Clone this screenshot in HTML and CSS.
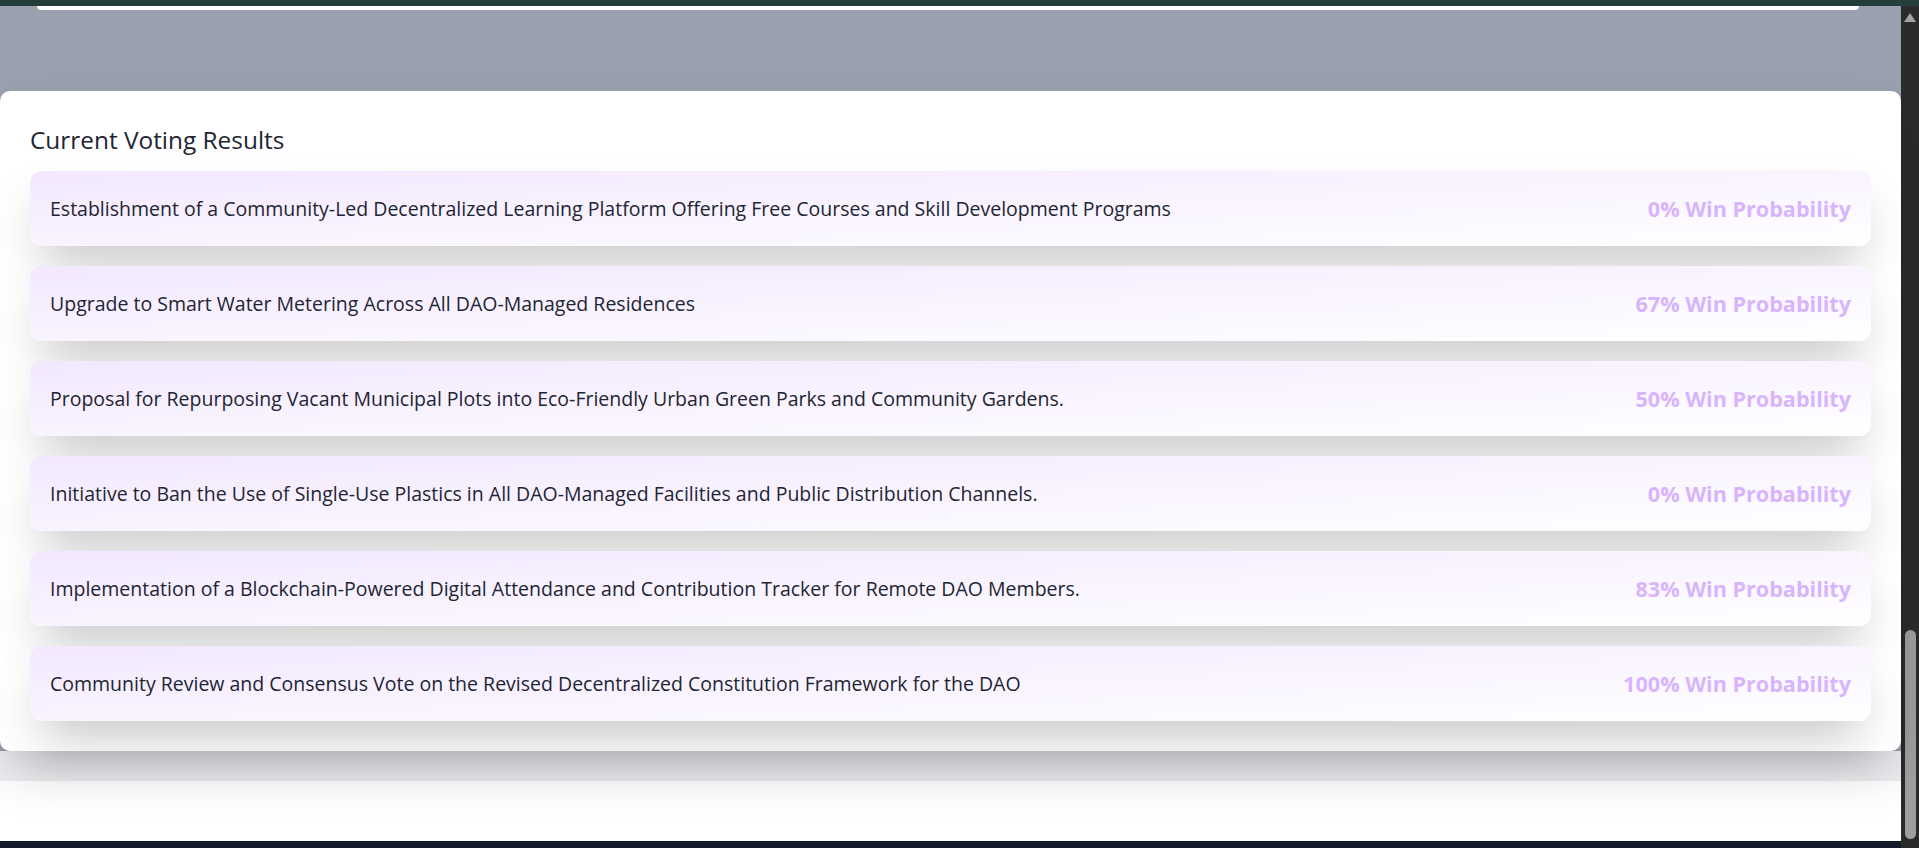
FILE: index.html
```html
<!DOCTYPE html>
<html lang="en">
<head>
<meta charset="utf-8">
<title>Current Voting Results</title>
<link rel="stylesheet" href="styles.css">
</head>
<body>
<div class="topbar"></div>
<div class="window">
  <div class="page">
    <section class="overlay">
      <div class="prev-card"></div>
      <div class="results-card">
        <h2 class="results-title">Current Voting Results</h2>
        <ul class="results-list">
          <li class="result-row">
            <span class="result-name">Establishment of a Community-Led Decentralized Learning Platform Offering Free Courses and Skill Development Programs</span>
            <span class="result-prob">0% Win Probability</span>
          </li>
          <li class="result-row">
            <span class="result-name">Upgrade to Smart Water Metering Across All DAO-Managed Residences</span>
            <span class="result-prob">67% Win Probability</span>
          </li>
          <li class="result-row">
            <span class="result-name">Proposal for Repurposing Vacant Municipal Plots into Eco-Friendly Urban Green Parks and Community Gardens.</span>
            <span class="result-prob">50% Win Probability</span>
          </li>
          <li class="result-row">
            <span class="result-name">Initiative to Ban the Use of Single-Use Plastics in All DAO-Managed Facilities and Public Distribution Channels.</span>
            <span class="result-prob">0% Win Probability</span>
          </li>
          <li class="result-row">
            <span class="result-name">Implementation of a Blockchain-Powered Digital Attendance and Contribution Tracker for Remote DAO Members.</span>
            <span class="result-prob">83% Win Probability</span>
          </li>
          <li class="result-row">
            <span class="result-name">Community Review and Consensus Vote on the Revised Decentralized Constitution Framework for the DAO</span>
            <span class="result-prob">100% Win Probability</span>
          </li>
        </ul>
      </div>
    </section>
    <div class="shadow-strip"></div>
    <div class="blank"></div>
    <footer class="footer"></footer>
  </div>
  <div class="scrollbar">
    <span class="scroll-arrow"></span>
    <span class="scroll-thumb"></span>
  </div>
</div>
</body>
</html>
```

FILE: styles.css
```css
* { box-sizing: border-box; }

html, body {
  margin: 0;
  padding: 0;
  height: 848px;
  overflow: hidden;
}

body {
  font-family: "Open Sans", "Noto Sans", sans-serif;
  color: #1f2937;
  background: #ffffff;
}

.topbar {
  height: 6px;
  background: #263e3b;
}

.window {
  display: flex;
  height: 842px;
}

.page {
  flex: 1;
  display: flex;
  flex-direction: column;
  min-width: 0;
}

.overlay {
  background: #9aa0ad;
  padding-bottom: 0;
}

.prev-card {
  height: 4px;
  margin: 0 42px 81px 37px;
  background: #ffffff;
  border-radius: 0 0 10px 10px;
  box-shadow: 0 25px 50px -12px rgba(0, 0, 0, 0.25);
}

.results-card {
  position: relative;
  z-index: 1;
  height: 660px;
  background: #ffffff;
  border-radius: 10px;
  padding: 31px 30px 30px 30px;
  box-shadow: 0 25px 50px -12px rgba(0, 0, 0, 0.25);
}

.results-title {
  margin: 0 0 13px 0;
  font-size: 24.4px;
  line-height: 36px;
  font-weight: 500;
  color: #1e2533;
}

.results-list {
  list-style: none;
  margin: 0;
  padding: 0;
  display: flex;
  flex-direction: column;
  gap: 20px;
}

.result-row {
  height: 75px;
  display: flex;
  align-items: center;
  justify-content: space-between;
  padding: 0 20px;
  border-radius: 12px;
  background: linear-gradient(to bottom right, #f3e8ff, #ffffff);
  box-shadow: 0 25px 50px -12px rgba(0, 0, 0, 0.25);
}

.result-name {
  font-size: 19.5px;
  font-weight: 500;
  color: #1e2533;
}

.result-prob {
  font-size: 21.6px;
  font-weight: 700;
  color: #d8b4fe;
}

.shadow-strip {
  height: 30px;
  background: #eceef1;
}

.blank {
  height: 60px;
  background: #ffffff;
}

.footer {
  flex: 1;
  background: #131a2a;
}

.scrollbar {
  width: 18px;
  background: #2b2b2b;
  display: flex;
  flex-direction: column;
  align-items: center;
}

.scroll-arrow {
  margin-top: 7px;
  width: 0;
  height: 0;
  border-left: 6px solid transparent;
  border-right: 6px solid transparent;
  border-bottom: 9px solid #a3a3a3;
}

.scroll-thumb {
  margin-top: auto;
  margin-bottom: 9px;
  width: 11px;
  height: 209px;
  border-radius: 6px;
  background: #9f9f9f;
}
```
